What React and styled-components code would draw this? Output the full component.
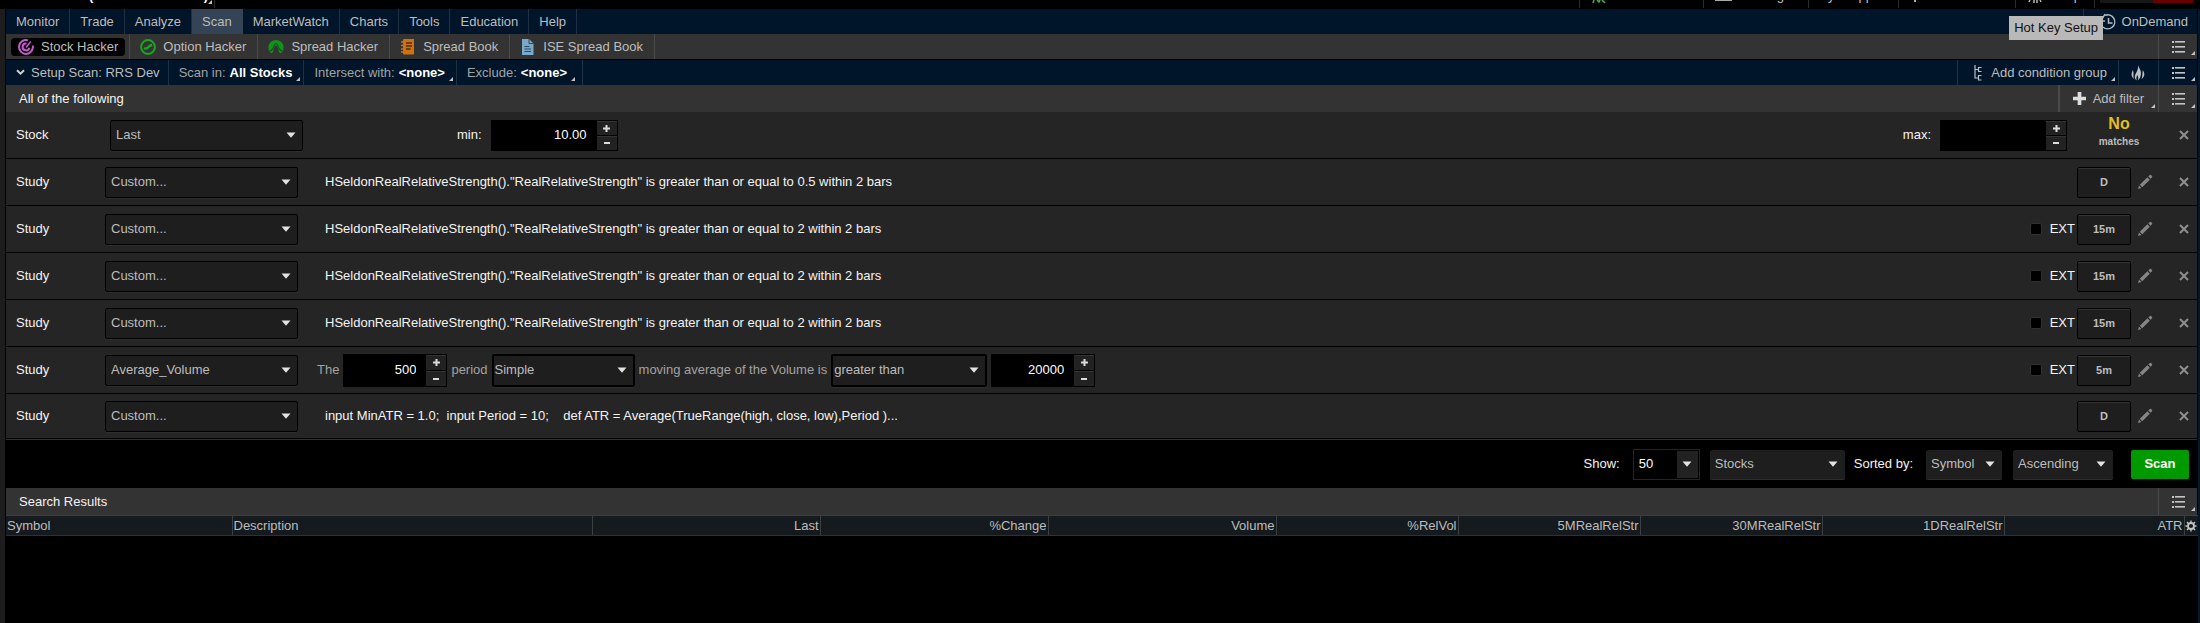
import React from "react";
import styled, { createGlobalStyle, css } from "styled-components";

const c = {
  navy: "#001529",
  gray: "#333333",
  row: "#252525",
  field: "#1e1e1e",
  text: "#bdbdbd",
  dim: "#a3a3a3",
  bright: "#f4f4f4",
};

const GlobalStyle = createGlobalStyle`
  *, *::before, *::after { box-sizing: border-box; }
  body { margin: 0; background: #000; }
  body, button, input, select { font-family: "Liberation Sans", Arial, sans-serif; font-size: 13px; line-height: 16px; color: ${c.text}; }
  button, input, select { margin: 0; padding: 0; border: 0; border-radius: 0; background: none; outline: none; }
  svg { display: block; flex: none; }
`;

const Page = styled.div`
  min-height: 100vh;
  display: flex;
  flex-direction: column;
  overflow: hidden;
  background: #000;
  white-space: nowrap;
`;

/* clipped title strip */
const TitleStrip = styled.header`
  height: 9px;
  display: flex;
  justify-content: space-between;
  overflow: hidden;
  padding: 0 7px 0 86px;
`;
const StripGroup = styled.div`
  display: flex;
`;
const StripCell = styled.div`
  width: ${(p) => p.$w}px;
  height: 8px;
  display: flex;
  justify-content: ${(p) => p.$justify || "flex-start"};
  gap: ${(p) => p.$gap || 0}px;
  padding: 0 ${(p) => p.$pr || 0}px 0 ${(p) => p.$pl || 0}px;
  border-left: 1px solid #2b2b2b;
  ${(p) => p.$bare && css`border-left-color: transparent;`}
`;
const StripText = styled.span`
  margin-top: -12px;
  color: #c8c8c8;
  ${(p) => p.$bold && css`font-weight: bold; color: #fff;`}
`;
const WindowButton = styled.button`
  width: ${(p) => p.$w}px;
  height: 3px;
  background: ${(p) => p.$bg};
`;

const Frame = styled.main`
  flex: 1;
  display: flex;
  flex-direction: column;
  background: #000;
  border-left: 5px solid #1d1d1d;
  border-right: 2px solid #04182b;
  padding: 0 1px;
`;

const Bar = styled.div`
  display: flex;
  align-items: stretch;
  height: ${(p) => p.$h || 25}px;
  background: ${(p) => (p.$navy ? c.navy : c.gray)};
  flex: none;
`;
const SubBar = styled(Bar).attrs({ as: "nav" })`
  margin-bottom: 1px;
`;
const Spacer = styled.div`
  flex: 1;
`;

const MenuItem = styled.button`
  padding: 0 10px;
  border-right: 1px solid ${(p) => (p.$active ? "#344355" : "#1f3042")};
  ${(p) => p.$active && css`background: #344355;`}
`;
const OnDemandWrap = styled.div`
  position: relative;
  display: flex;
`;
const OnDemand = styled.button`
  display: flex;
  align-items: center;
  gap: 5px;
  padding: 0 9px 0 15px;
  border-left: 1px solid #1f3042;
`;
const Tooltip = styled.div`
  position: absolute;
  z-index: 2;
  top: 7px;
  right: 94px;
  padding: 4px 5px;
  background: #b9b9b9;
  color: #111;
`;

const TabCell = styled.div`
  display: flex;
  align-items: center;
  padding: 0 4px 0 3px;
  border-right: 1px solid #4a4a4a;
  &:first-child { padding-left: 5px; }
`;
const Tab = styled.button`
  display: flex;
  align-items: center;
  gap: 7px;
  height: 18px;
  padding: 0 7px;
  border-radius: 4px;
  ${(p) => p.$active && css`background: #000;`}
`;

const Corner = styled.i`
  flex: none;
  align-self: flex-end;
  width: 0;
  height: 0;
  margin-bottom: 4px;
  border-left: 4px solid transparent;
  border-bottom: 4px solid #c4c4c4;
`;
const BarButton = styled.button`
  display: flex;
  align-items: center;
  gap: ${(p) => p.$gap || 4}px;
  padding: 0 ${(p) => p.$pr || 3}px 0 ${(p) => p.$pl || 10}px;
  ${(p) => (p.$left ? "border-left" : "border-right")}: ${(p) => p.$line || 1}px solid
    ${(p) => (p.$onGray ? "#4a4a4a" : "#1f3042")};
`;
const Dim = styled.span`
  color: ${c.dim};
`;
const Strong = styled.strong`
  color: #fff;
`;
const ListCell = styled.button`
  display: flex;
  align-items: center;
  gap: 6px;
  width: 39px;
  padding: 0 2px 0 13px;
  border-left: 1px solid ${(p) => (p.$navy ? "#1f3042" : "#4a4a4a")};
`;
const BarTitle = styled.h2`
  margin: 0;
  align-self: center;
  padding-left: 13px;
  font-size: 13px;
  font-weight: normal;
  color: ${c.bright};
`;

/* filter rows */
const Row = styled.div`
  display: flex;
  align-items: center;
  height: ${(p) => p.$h || 47}px;
  padding-left: 10px;
  background: ${c.row};
  border-bottom: 1px solid #000;
`;
const RowLabel = styled.span`
  width: ${(p) => (p.$wide ? 94 : 89)}px;
  color: ${c.bright};
`;
const SelectBox = styled.span`
  display: inline-grid;
  align-items: center;
  width: ${(p) => p.$w}px;
  height: ${(p) => p.$h || 31}px;
  background: ${c.field};
  border: ${(p) => p.$line || 1}px solid #000;
  border-radius: 2px;
  box-shadow: 0 1px 0 #2d2d2d;
  ${(p) => p.$flat && css`border-color: ${c.field};`}
  & > * { grid-area: 1 / 1; }
  & > svg { justify-self: end; margin-right: 6px; pointer-events: none; }
`;
const NativeSelect = styled.select`
  appearance: none;
  width: 100%;
  height: 100%;
  padding-left: ${(p) => p.$pl || 5}px;
`;
const Expression = styled.span`
  margin-left: 27px;
  color: ${c.bright};
  white-space: pre;
`;
const Sentence = styled.div`
  display: flex;
  align-items: center;
  gap: 4px;
  margin-left: 19px;
  color: ${c.dim};
`;
const SpinBox = styled.span`
  display: flex;
  width: ${(p) => p.$w}px;
  height: ${(p) => p.$h || 31}px;
  padding: 1px;
  background: #000;
`;
const SpinInput = styled.input`
  flex: 1;
  min-width: 0;
  padding-right: 10px;
  text-align: right;
  color: #fff;
`;
const SpinButtons = styled.span`
  display: flex;
  flex-direction: column;
  gap: 1px;
  width: 20px;
`;
const SpinButton = styled.button`
  flex: 1;
  display: flex;
  align-items: center;
  justify-content: center;
  background: #222;
  border-top: 1px solid #333;
`;
const FieldLabel = styled.label`
  display: flex;
  align-items: center;
  gap: 9px;
  color: ${c.bright};
  margin-left: ${(p) => p.$ml || 0}px;
`;
const Matches = styled.div`
  display: flex;
  flex-direction: column;
  align-items: center;
  width: 104px;
  height: 45px;
  padding-top: 3px;
  font-size: 10px;
  font-weight: bold;
  line-height: 20px;
`;
const MatchCount = styled.span`
  font-size: 16px;
  line-height: 16px;
  color: #e6bd22;
`;
const ExtLabel = styled.label`
  display: flex;
  align-items: center;
  gap: 8px;
  margin-right: 2px;
  color: ${c.bright};
`;
const Check = styled.input`
  appearance: none;
  width: 12px;
  height: 12px;
  background: #000;
  border: 1px solid #303030;
  border-radius: 2px;
`;
const TimeFrame = styled.button`
  width: 54px;
  height: 31px;
  font-size: 11px;
  font-weight: bold;
  background: ${c.field};
  border: 1px solid #000;
  border-radius: 2px;
  box-shadow: inset 0 1px 0 #333;
`;
const IconButton = styled.button`
  display: flex;
  align-items: center;
  justify-content: center;
  width: ${(p) => p.$w}px;
  height: 31px;
`;

/* scan controls */
const Controls = styled.form`
  display: flex;
  align-items: center;
  justify-content: flex-end;
  height: 49px;
  padding-right: 8px;
  border-top: 1px solid #303030;
`;
const Combo = styled.span`
  display: flex;
  width: 67px;
  height: 31px;
  margin-left: 13px;
  padding: 1px;
  border: 1px solid #242424;
`;
const ComboInput = styled.input`
  flex: 1;
  min-width: 0;
  padding-left: 4px;
  color: #fff;
`;
const ComboButton = styled.button`
  display: flex;
  align-items: center;
  justify-content: center;
  width: 21px;
  background: #222;
`;
const ControlLabel = styled.label`
  color: ${c.bright};
`;
const Gap = styled.span`
  width: ${(p) => p.$w}px;
`;
const ScanButton = styled.button`
  width: 58px;
  height: 29px;
  background: #009a00;
  border-radius: 2px;
  color: #fff;
  font-weight: bold;
`;

/* results */
const Results = styled.table`
  width: 100%;
  table-layout: fixed;
  border-collapse: collapse;
  background: #141a1e;
`;
const Th = styled.th`
  height: 20px;
  padding: 0 1px;
  font-weight: normal;
  text-align: ${(p) => (p.$left ? "left" : "right")};
  border-right: 1px solid #3a3f42;
  border-top: 1px solid #3a3f42;
  border-bottom: 1px solid #2c3134;
  &:last-child { padding: 0; border-right: 0; }
`;
const GearButton = styled.button`
  display: flex;
  margin: 0 auto;
`;

const Arrow = () => (
  <svg width="10" height="6" viewBox="0 0 10 6"><path d="M0.5 0.5h9L5 5.8z" fill="#e2e2e2" /></svg>
);
const ListIcon = () => (
  <svg width="13" height="12" viewBox="0 0 13 12" fill="#c4c4c4">
    {[0, 5, 10].map((y) => (
      <g key={y}><rect x="0" y={y} width="2" height="2" /><rect x="3" y={y} width="10" height="1.6" /></g>
    ))}
  </svg>
);
const CloseIcon = () => (
  <svg width="10" height="10" viewBox="0 0 10 10" stroke="#8f8f8f" strokeWidth="2"><path d="M1 1l8 8M9 1L1 9" /></svg>
);
const PencilIcon = () => (
  <svg width="16" height="16" viewBox="0 0 16 16" fill="#868686">
    <path d="M1 15l1-3.4 2.4 2.4zM2.8 10.8l7.6-7.5 2.4 2.4-7.6 7.5zM11.3 2.5L12.8 1q.6-.5 1.2 0l1 1q.6.6 0 1.2L13.6 4.8z" />
  </svg>
);
const Plus = ({ size = 7 }) => (
  <svg width={size} height={size} viewBox="0 0 7 7" fill="#dcdcdc"><path d="M2.5 0h2v2.500H7v2H4.500V7h-2V4.500H0v-2h2.500z" /></svg>
);
const Minus = () => (
  <svg width="6" height="2" viewBox="0 0 6 2"><rect width="6" height="2" fill="#dcdcdc" /></svg>
);
const Chevron = () => (
  <svg width="9" height="7" viewBox="0 0 9 7" fill="none" stroke="#d0d0d0" strokeWidth="2"><path d="M1 1.2l3.500 3.500L8 1.200" /></svg>
);
const StockIcon = () => (
  <svg width="16" height="16" viewBox="0 0 16 16" fill="none" stroke="#c75bd0" strokeWidth="2">
    <path d="M10 1.400A6.900 6.900 0 1 0 14.700 6.500" />
    <path d="M8.500 4.600A3.400 3.400 0 1 0 11.300 8.800" />
    <path d="M8 8.400L12.800 2.600" strokeWidth="1.500" />
  </svg>
);
const OptionIcon = () => (
  <svg width="16" height="16" viewBox="0 0 16 16" fill="none" stroke="#18a81f">
    <circle cx="8" cy="8" r="6.900" strokeWidth="2" />
    <path d="M4 9.200c2.500 1.200 3.500 0 4.500-1.200S10.500 6.300 12.200 6" strokeWidth="2.400" />
  </svg>
);
const SpreadIcon = () => (
  <svg width="16" height="16" viewBox="0 0 16 16">
    <path d="M1.500 12.500A7.600 7.600 0 1 1 14.500 12.500L12.500 14.500Q10.500 13 10 9.500Q9.500 6.500 8 6.500T6 9.500Q5.500 13 3.500 14.500z" fill="#0f9417" />
    <path d="M1.500 12Q4.500 11.500 5.500 8.500Q6.500 4.800 8 4.800T10.500 8.500Q11.500 11.500 14.500 12" fill="none" stroke="#234a25" strokeWidth="1.100" />
  </svg>
);
const BookIcon = () => (
  <svg width="16" height="16" viewBox="0 0 16 16">
    <path d="M3 1q0-1 1-1h10v15.500H4q-1 0-1-1z" fill="#d0700f" />
    <path d="M1 3h3M1 6.500h3M1 10h3M1 13h3" stroke="#d0700f" strokeWidth="1.500" />
    <path d="M6 4h6M6 7h6M6 10h4.500" stroke="#4a2b0c" strokeWidth="1.300" />
  </svg>
);
const FileIcon = () => (
  <svg width="16" height="16" viewBox="0 0 16 16">
    <path d="M2 0h7l4.500 4.500V16H2z" fill="#78a9c8" />
    <path d="M9 0v4.500h4.500" fill="none" stroke="#2f4655" />
    <path d="M4.500 7.500h5M4.500 10h6.500M4.500 12.500h6.500" stroke="#2f4655" strokeWidth="1.200" />
  </svg>
);
const ClockIcon = () => (
  <svg width="18" height="18" viewBox="0 0 18 18" fill="none" stroke="#b5bcc2" strokeWidth="1.500">
    <path d="M6 2.400A7 7 0 1 1 4 14" />
    <path d="M9.500 5v5h4" />
    <path d="M6 1L2 8h4" />
  </svg>
);
const TreeIcon = () => (
  <svg width="8" height="16" viewBox="0 0 8 16" fill="none" stroke="#b9c0c6" strokeWidth="1.200">
    <path d="M1 0v13H4M1 4.500H4M7.500 2.500H4.500v4H7.500M7.500 10.500H4.500v4.500H7.500" />
  </svg>
);
const FlameIcon = () => (
  <svg width="14" height="16" viewBox="0 0 14 16" fill="#bcc1c4">
    <path d="M7 0c.5 2.500 3 4.500 3 8.500 0 3-1.200 5-3 7 .5-2.500.2-4-.8-5.500C5.500 12 5 13.500 5.800 15.500 3.500 14 3.300 11.500 4.500 9 6 6 7.500 4 7 0z" />
    <path d="M2 5c-1.600 2.800-2.400 5.800.8 9C2 11 3 9 2 5zM11.800 5c2.200 3.500 2.200 6-1.300 9.200C11.800 11 11.200 8.500 11.800 5z" />
  </svg>
);
const GearIcon = () => (
  <svg width="12" height="12" viewBox="0 0 12 12" fill="none" stroke="#c4c4c4">
    <circle cx="6" cy="6" r="3" strokeWidth="1.800" />
    <path d="M6 .5v2M6 9.500v2M.5 6h2M9.500 6h2M2 2l1.400 1.400M8.600 8.600L10 10M10 2L8.600 3.400M3.400 8.600L2 10" strokeWidth="1.400" />
  </svg>
);

const Select = ({ value, label, id, pl, ...box }) => (
  <SelectBox {...box}>
    <NativeSelect aria-label={label} id={id} $pl={pl} defaultValue={value}>
      <option>{value}</option>
    </NativeSelect>
    <Arrow />
  </SelectBox>
);
const Spin = ({ value = "", label, id, w, h }) => (
  <SpinBox $w={w} $h={h}>
    <SpinInput id={id} aria-label={label} defaultValue={value} />
    <SpinButtons>
      <SpinButton type="button" aria-label="Increase"><Plus /></SpinButton>
      <SpinButton type="button" aria-label="Decrease"><Minus /></SpinButton>
    </SpinButtons>
  </SpinBox>
);
const Close = () => (
  <IconButton $w={26} aria-label="Remove filter"><CloseIcon /></IconButton>
);
const ListButton = ({ navy }) => (
  <ListCell $navy={navy} aria-label="Menu"><ListIcon /><Corner /></ListCell>
);

const StudyRow = ({ kind = "Custom...", frame, ext, h, children }) => (
  <Row $h={h}>
    <RowLabel>Study</RowLabel>
    <Select $w={193} value={kind} label="Study" />
    {children}
    <Spacer />
    {ext && <ExtLabel><Check type="checkbox" />EXT</ExtLabel>}
    <TimeFrame>{frame}</TimeFrame>
    <Gap $w={6} />
    <IconButton $w={16} aria-label="Edit study"><PencilIcon /></IconButton>
    <Gap $w={18} />
    <Close />
  </Row>
);

const menu = ["Monitor", "Trade", "Analyze", "Scan", "MarketWatch", "Charts", "Tools", "Education", "Help"];
const tabs = [
  ["Stock Hacker", StockIcon],
  ["Option Hacker", OptionIcon],
  ["Spread Hacker", SpreadIcon],
  ["Spread Book", BookIcon],
  ["ISE Spread Book", FileIcon],
];
const strength = [
  ["0.5", "D", false],
  ["2", "15m", true],
  ["2", "15m", true],
  ["2", "15m", true],
];
const columns = [
  ["Symbol", 226], ["Description", 360], ["Last", 228], ["%Change", 228], ["Volume", 228],
  ["%RelVol", 182], ["5MRealRelStr", 182], ["30MRealRelStr", 182], ["1DRealRelStr", 182], ["ATR", 180],
];

export default function App() {
  return (
    <Page>
      <GlobalStyle />
      <TitleStrip>
        <StripGroup>
          <StripCell $bare $w={128} $justify="space-between" $pl={2} $pr={2}>
            <StripText $bold>(</StripText>
            <StripGroup><StripText $bold>)</StripText><Corner /></StripGroup>
          </StripCell>
          <StripCell $w={10} />
        </StripGroup>
        <StripGroup>
          <StripCell $w={124} $pl={12}>
            <svg width="14" height="4" viewBox="0 0 14 4" stroke="#4caf50" strokeWidth="1.500"><path d="M2 0L1 3M5 0l2 2 1-2M10 0l3 3" fill="none" /></svg>
          </StripCell>
          <StripCell $w={105} $pl={11} $pr={24} $justify="space-between">
            <svg width="17" height="2"><rect width="17" height="1" fill="#aaa" /></svg>
            <StripText>g</StripText>
          </StripCell>
          <StripCell $w={90} $pl={19} $gap={24}>
            <StripText>y</StripText><StripText>pp</StripText>
          </StripCell>
          <StripCell $w={117} $pl={15}>
            <svg width="3" height="2"><rect width="2" height="2" fill="#aaa" /></svg>
          </StripCell>
          <StripCell $w={79} $pl={12} $pr={13} $justify="space-between">
            <svg width="14" height="3" viewBox="0 0 14 3" stroke="#bbb" strokeWidth="1.500"><path d="M2 0L1 2M6 0v3M9 0v3M12 0l1 2" /></svg>
            <StripText>p</StripText>
          </StripCell>
          <StripCell $w={99} $pl={5}>
            <WindowButton $w={53} $bg="#171717" aria-label="Minimize" />
            <WindowButton $w={40} $bg="#6b0000" aria-label="Close" />
          </StripCell>
        </StripGroup>
      </TitleStrip>

      <Frame>
        <Bar $navy as="nav">
          {menu.map((m) => <MenuItem key={m} $active={m === "Scan"}>{m}</MenuItem>)}
          <Spacer />
          <OnDemandWrap>
            <OnDemand><ClockIcon />OnDemand</OnDemand>
            <Tooltip role="tooltip">Hot Key Setup</Tooltip>
          </OnDemandWrap>
        </Bar>

        <SubBar>
          {tabs.map(([name, Icon], i) => (
            <TabCell key={name}><Tab $active={i === 0}><Icon />{name}</Tab></TabCell>
          ))}
          <Spacer />
          <ListButton />
        </SubBar>

        <Bar $navy>
          <BarButton $gap={6} $pr={8}><Chevron />Setup Scan: RRS Dev</BarButton>
          <BarButton><Dim>Scan in:</Dim><Strong>All Stocks</Strong><Corner /></BarButton>
          <BarButton><Dim>Intersect with:</Dim><Strong>&lt;none&gt;</Strong><Corner /></BarButton>
          <BarButton $pr={7}><Dim>Exclude:</Dim><Strong>&lt;none&gt;</Strong><Corner /></BarButton>
          <Spacer />
          <BarButton $left $pl={16}><TreeIcon /><Gap $w={1} />Add condition group<Corner /></BarButton>
          <BarButton $left $pl={12} $pr={13} aria-label="Hot scans"><FlameIcon /></BarButton>
          <ListButton navy />
        </Bar>

        <Bar $h={27}>
          <BarTitle>All of the following</BarTitle>
          <Spacer />
          <BarButton $left $onGray $line={2} $pl={13} $gap={7}><Plus size={13} />Add filter<Corner /></BarButton>
          <ListButton />
        </Bar>

        <Row>
          <RowLabel $wide>Stock</RowLabel>
          <Select $w={193} value="Last" label="Stock field" />
          <FieldLabel htmlFor="min" $ml={154}>min:<Spin id="min" w={127} value="10.00" /></FieldLabel>
          <Spacer />
          <FieldLabel htmlFor="max">max:<Spin id="max" w={127} /></FieldLabel>
          <Matches><MatchCount>No</MatchCount>matches</Matches>
          <Close />
        </Row>

        {strength.map(([n, frame, ext], i) => (
          <StudyRow key={i} frame={frame} ext={ext}>
            <Expression>{`HSeldonRealRelativeStrength()."RealRelativeStrength" is greater than or equal to ${n} within 2 bars`}</Expression>
          </StudyRow>
        ))}
        <StudyRow kind="Average_Volume" frame="5m" ext>
          <Sentence>
            The
            <Spin w={104} h={33} value="500" label="Period" />
            period
            <Select $w={143} $h={33} $line={2} value="Simple" pl={1} label="Average type" />
            moving average of the Volume is
            <Select $w={156} $h={33} $line={2} value="greater than" pl={1} label="Comparison" />
            <Spin w={104} h={33} value="20000" label="Volume" />
          </Sentence>
        </StudyRow>
        <StudyRow frame="D" h={45}>
          <Expression>{"input MinATR = 1.0;  input Period = 10;    def ATR = Average(TrueRange(high, close, low),Period )..."}</Expression>
        </StudyRow>

        <Controls>
          <ControlLabel htmlFor="show">Show:</ControlLabel>
          <Combo>
            <ComboInput id="show" defaultValue="50" />
            <ComboButton type="button" aria-label="Show options"><Arrow /></ComboButton>
          </Combo>
          <Gap $w={10} />
          <Select $flat $w={135} $h={29} pl={4} value="Stocks" label="Instrument" />
          <Gap $w={9} />
          <ControlLabel htmlFor="sort">Sorted by:</ControlLabel>
          <Gap $w={13} />
          <Select $flat $w={76} $h={29} pl={4} id="sort" value="Symbol" />
          <Gap $w={11} />
          <Select $flat $w={100} $h={29} pl={4} value="Ascending" label="Sort order" />
          <Gap $w={18} />
          <ScanButton type="button">Scan</ScanButton>
        </Controls>

        <Bar $h={27}>
          <BarTitle>Search Results</BarTitle>
          <Spacer />
          <ListButton />
        </Bar>
        <Results>
          <colgroup>
            {columns.map(([n, w]) => <col key={n} width={w} />)}
            <col width="14" />
          </colgroup>
          <thead>
            <tr>
              {columns.map(([n], i) => <Th key={n} scope="col" $left={i < 2}>{n}</Th>)}
              <Th><GearButton aria-label="Column settings"><GearIcon /></GearButton></Th>
            </tr>
          </thead>
        </Results>
      </Frame>
    </Page>
  );
}
